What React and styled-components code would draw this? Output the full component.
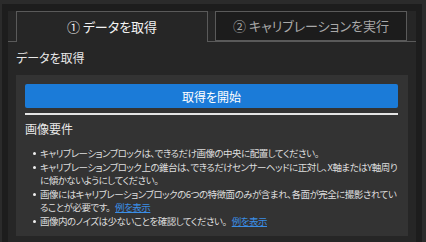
import React, { useState } from 'react'
import styled, { createGlobalStyle } from 'styled-components'

const GlobalStyle = createGlobalStyle`
  html, body {
    margin: 0;
    background: #2b2b2b;
  }
  body {
    font-family: "Noto Sans CJK JP", "Noto Sans", sans-serif;
    font-feature-settings: "palt";
  }
`

const Window = styled.div`
  width: 426px;
  height: 242px;
  box-sizing: border-box;
  padding: 4px 4px 0 2px;
  background: #2b2b2b;
  display: flex;
`

const Frame = styled.div`
  flex: 1;
  display: flex;
  flex-direction: column;
  background: #1d1d1d;
  padding: 7px 6px 0 6px;
`

const Panel = styled.div`
  flex: 1;
  display: flex;
  flex-direction: column;
  background: #262626;
`

const TabBar = styled.div`
  display: flex;
  gap: 7px;
  padding: 0 9px 0 8px;
  height: 30px;
  border-bottom: 1px solid #5a5a5a;
  background: #262626;
`

const Tab = styled.button`
  flex: 1;
  box-sizing: border-box;
  margin-bottom: ${p => (p.$active ? '-1px' : '0')};
  height: ${p => (p.$active ? '31px' : '30px')};
  border: 1px solid #5a5a5a;
  border-bottom: ${p => (p.$active ? 'none' : '1px solid #5a5a5a')};
  background: ${p => (p.$active ? '#262626' : '#1c1c1c')};
  color: ${p => (p.$active ? '#f2f2f2' : '#a9a9a9')};
  font-family: inherit;
  font-feature-settings: "palt";
  font-size: 13px;
  padding: 0 0 2px;
  cursor: pointer;
`

const Content = styled.div`
  flex: 1;
  display: flex;
  flex-direction: column;
  padding: 0 8px 7px 8px;
  background: #262626;
`

const SectionTitle = styled.div`
  font-size: 12px;
  line-height: 16px;
  color: #e8e8e8;
  margin: 8px 0 9px;
`

const Card = styled.div`
  flex: 1;
  background: #333333;
  padding: 9px 10px 8px 9px;
  display: flex;
  flex-direction: column;
`

const StartButton = styled.button`
  height: 24px;
  border: none;
  border-radius: 2px;
  background: #1b7bd8;
  color: #ffffff;
  font-family: inherit;
  font-feature-settings: "palt";
  font-size: 12px;
  cursor: pointer;
`

const Divider = styled.div`
  height: 2px;
  background: #e4e4e4;
  margin-top: 5px;
`

const ReqTitle = styled.div`
  font-size: 12px;
  line-height: 16px;
  color: #e8e8e8;
  margin-top: 6px;
`

const ReqList = styled.ul`
  list-style: none;
  margin: 10px 0 0;
  padding: 0 0 0 15px;
`

const ReqItem = styled.li`
  position: relative;
  font-size: 9.5px;
  line-height: 13.5px;
  letter-spacing: -0.5px;
  color: #dedede;

  &::before {
    content: '';
    position: absolute;
    left: -7px;
    top: 5px;
    width: 3px;
    height: 3px;
    border-radius: 50%;
    background: #f0f0f0;
  }
`

const ExampleLink = styled.a`
  display: inline-block;
  color: #3a8ee6;
  text-decoration: underline;
  margin-left: 5px;
  line-height: 13px;
  cursor: pointer;
`

const requirements = [
  { text: 'キャリブレーションブロックは、できるだけ画像の中央に配置してください。' },
  { text: 'キャリブレーションブロック上の錐台は、できるだけセンサーヘッドに正対し、X軸またはY軸周りに傾かないようにしてください。' },
  { text: '画像にはキャリブレーションブロックの6つの特徴面のみが含まれ、各面が完全に撮影されていることが必要です。', example: true },
  { text: '画像内のノイズは少ないことを確認してください。', example: true }
]

function App () {
  const [tab, setTab] = useState(0)

  return (
    <>
      <GlobalStyle />
      <Window>
        <Frame>
          <Panel>
            <TabBar>
              <Tab $active={tab === 0} onClick={() => setTab(0)}>① データを取得</Tab>
              <Tab $active={tab === 1} onClick={() => setTab(1)}>② キャリブレーションを実行</Tab>
            </TabBar>
            <Content>
              <SectionTitle>データを取得</SectionTitle>
              <Card>
                <StartButton>取得を開始</StartButton>
                <Divider />
                <ReqTitle>画像要件</ReqTitle>
                <ReqList>
                  {requirements.map((r, i) => (
                    <ReqItem key={i}>
                      {r.text}
                      {r.example && <ExampleLink>例を表示</ExampleLink>}
                    </ReqItem>
                  ))}
                </ReqList>
              </Card>
            </Content>
          </Panel>
        </Frame>
      </Window>
    </>
  )
}

export default App
